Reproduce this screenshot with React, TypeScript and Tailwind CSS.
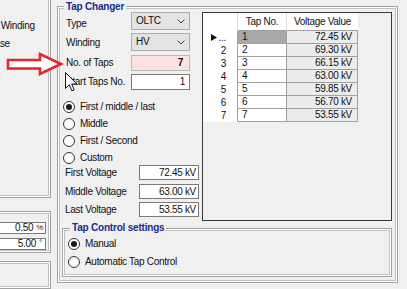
import * as React from "react";

// Windows-style etched group box edge: gray / white / gray.
const etched =
  "border border-[#a3a3a3] shadow-[inset_0_0_0_1px_#ffffff,inset_0_0_0_2px_#c2c2c2]";

const taps = [
  ["1", "72.45 kV"],
  ["2", "69.30 kV"],
  ["3", "66.15 kV"],
  ["4", "63.00 kV"],
  ["5", "59.85 kV"],
  ["6", "56.70 kV"],
  ["7", "53.55 kV"],
];

function Chevron() {
  return (
    <svg width="8" height="5" viewBox="0 0 8 5" aria-hidden="true">
      <path d="M0.5 0.5 L4 4 L7.5 0.5" fill="none" stroke="#404040" strokeWidth="1" />
    </svg>
  );
}

function Select({ value }: { value: string }) {
  return (
    <div className="flex h-[18px] w-[59px] items-center justify-between border border-[#adadad] bg-[#e3e3e3] pl-[4px] pr-[4px]">
      <span>{value}</span>
      <Chevron />
    </div>
  );
}

function Radio({ checked, label }: { checked?: boolean; label: string }) {
  return (
    <div className="flex h-[14px] items-center gap-[5px]">
      <span className="flex h-[12px] w-[12px] items-center justify-center rounded-full border border-[#333333] bg-white">
        {checked && <span className="h-[6px] w-[6px] rounded-full bg-[#1a1a1a]" />}
      </span>
      <span>{label}</span>
    </div>
  );
}

function VoltageRow({ label, value, className }: { label: string; value: string; className?: string }) {
  return (
    <div className={`flex h-[15px] items-center pl-[2px] ${className ?? ""}`}>
      <span className="w-[74px]">{label}</span>
      <div className="flex h-[15px] w-[60px] items-center justify-end border border-[#7a7a7a] bg-white pr-[2px]">
        {value}
      </div>
    </div>
  );
}

function TapTable() {
  return (
    <div className="mt-[5px] flex h-[209px] w-[190px] flex-col border border-[#3a3a3a] bg-[#f0f0f0]">
      <div className="flex h-[18px]">
        <div className="w-[35px] border-r border-[#dcdcdc] bg-white" />
        <div className="flex w-[49px] items-center justify-center border-r border-b border-[#dcdcdc] border-b-[#a0a0a0] bg-white">
          Tap No.
        </div>
        <div className="flex w-[71px] items-center justify-center border-b border-[#a0a0a0] bg-white">
          Voltage Value
        </div>
      </div>
      {taps.map(([n, v], i) => (
        <div key={n} className="flex h-[13px] leading-[12px]">
          <div className="flex w-[35px] items-center justify-end border-r border-[#a0a0a0] bg-white pr-[11px]">
            {i === 0 ? (
              <>
                <svg width="6" height="7" viewBox="0 0 6 7" className="mr-[2px]" aria-hidden="true">
                  <path d="M0 0 L6 3.5 L0 7 Z" fill="#111" />
                </svg>
                <span>...</span>
              </>
            ) : (
              n
            )}
          </div>
          <div
            className={`w-[49px] border-r border-b border-[#a0a0a0] pl-[4px] ${
              i === 0 ? "bg-[#a8a8a8]" : "bg-white"
            }`}
          >
            {n}
          </div>
          <div className="w-[71px] border-r border-b border-[#a0a0a0] bg-[#ececec] pr-[5px] text-right">
            {v}
          </div>
        </div>
      ))}
    </div>
  );
}

function Cursor() {
  return (
    <svg
      width="13"
      height="20"
      viewBox="0 0 13 20"
      className="absolute left-[65px] top-[72px]"
      aria-hidden="true"
    >
      <path
        d="M0.5 0.5 L0.5 16.5 L4.3 12.8 L6.8 18.8 L9.2 17.8 L6.7 12 L11.8 12 Z"
        fill="#ffffff"
        stroke="#111111"
        strokeWidth="1"
        strokeLinejoin="round"
      />
    </svg>
  );
}

function RedArrow() {
  return (
    <svg
      width="60"
      height="26"
      viewBox="0 0 60 26"
      className="absolute left-[5px] top-[51px]"
      aria-hidden="true"
    >
      <path
        d="M3 9 L35 9 L35 3 L56 13 L35 23 L35 17.5 L3 17.5 Z"
        fill="#ffffff"
        stroke="#e1252b"
        strokeWidth="2.6"
        strokeLinejoin="miter"
      />
    </svg>
  );
}

export default function App() {
  return (
    <div className="relative flex h-[289px] w-[407px] overflow-hidden bg-[#f0f0f0] font-['Liberation_Sans',Arial,sans-serif] text-[10px] leading-[12px] tracking-[-0.3px] text-[#111111]">
      {/* Left column, mostly cut off by the window edge */}
      <div className="flex w-[51px] shrink-0 flex-col">
        <div className={`-ml-[20px] -mt-[10px] flex h-[224px] w-[71px] flex-col gap-[6px] pl-[2px] pt-[29px] ${etched}`}>
          <span>Tap Winding</span>
          <span>Phase</span>
        </div>
        <div className={`-ml-[20px] mt-[13px] flex h-[45px] w-[71px] flex-col gap-[4px] pt-[10px] ${etched}`}>
          <div className="ml-[9px] flex h-[12px] w-[56px] items-center justify-end border border-[#7a7a7a] bg-white pr-[2px]">
            0.50<span className="ml-[3px] text-[8px]">%</span>
          </div>
          <div className="ml-[9px] flex h-[12px] w-[56px] items-center justify-end border border-[#7a7a7a] bg-white pr-[3px]">
            5.00<span className="ml-[3px] mb-[3px] text-[8px]">°</span>
          </div>
        </div>
        <div className={`-ml-[20px] mt-[8px] h-[30px] w-[71px] ${etched}`} />
      </div>

      {/* Tap Changer group */}
      <div className={`relative ml-[6px] mt-[6px] flex h-[277px] w-[341px] shrink-0 flex-col ${etched}`}>
        <span className="absolute -top-[6px] left-[6px] bg-[#f0f0f0] px-[2px] text-[10px] font-bold tracking-[-0.2px] text-[#1b2a8c]">
          Tap Changer
        </span>

        <div className="flex">
          <div className="flex w-[144px] shrink-0 flex-col pl-[5px] pt-[5px]">
            <div className="flex h-[18px] items-center pl-[3px]">
              <span className="w-[65px] pt-[6px]">Type</span>
              <Select value="OLTC" />
            </div>
            <div className="mt-[3px] flex h-[18px] items-center pl-[3px]">
              <span className="w-[65px] pt-[1px]">Winding</span>
              <Select value="HV" />
            </div>
            <div className="mt-[4px] flex h-[16px] items-center pl-[3px]">
              <span className="w-[65px]">No. of Taps</span>
              <div className="flex h-[16px] w-[59px] items-center justify-end border border-[#b8b8b8] bg-[#fce3e1] pr-[6px] font-bold">
                7
              </div>
            </div>
            <div className="mt-[3px] flex h-[16px] items-center pl-[3px]">
              <span className="w-[65px]">Start Taps No.</span>
              <div className="flex h-[16px] w-[59px] items-center justify-end border border-[#7a7a7a] bg-white pr-[4px]">
                1
              </div>
            </div>

            <div className="mt-[10px] flex flex-col gap-[3px]">
              <Radio checked label="First / middle / last" />
              <Radio label="Middle" />
              <Radio label="First / Second" />
              <Radio label="Custom" />
            </div>

            <VoltageRow label="First Voltage" value="72.45 kV" />
            <VoltageRow className="mt-[4px]" label="Middle Voltage" value="63.00 kV" />
            <VoltageRow className="mt-[3px]" label="Last Voltage" value="53.55 kV" />
          </div>

          <TapTable />
        </div>

        {/* Tap Control settings group */}
        <div className={`relative ml-[4px] mt-[7px] flex h-[49px] w-[330px] flex-col gap-[4px] pl-[5px] pt-[8px] ${etched}`}>
          <span className="absolute -top-[7px] left-[7px] bg-[#f0f0f0] px-[2px] font-bold tracking-[-0.2px] text-[#1b2a8c]">
            Tap Control settings
          </span>
          <Radio checked label="Manual" />
          <Radio label="Automatic Tap Control" />
        </div>
      </div>

      <RedArrow />
      <Cursor />
    </div>
  );
}
